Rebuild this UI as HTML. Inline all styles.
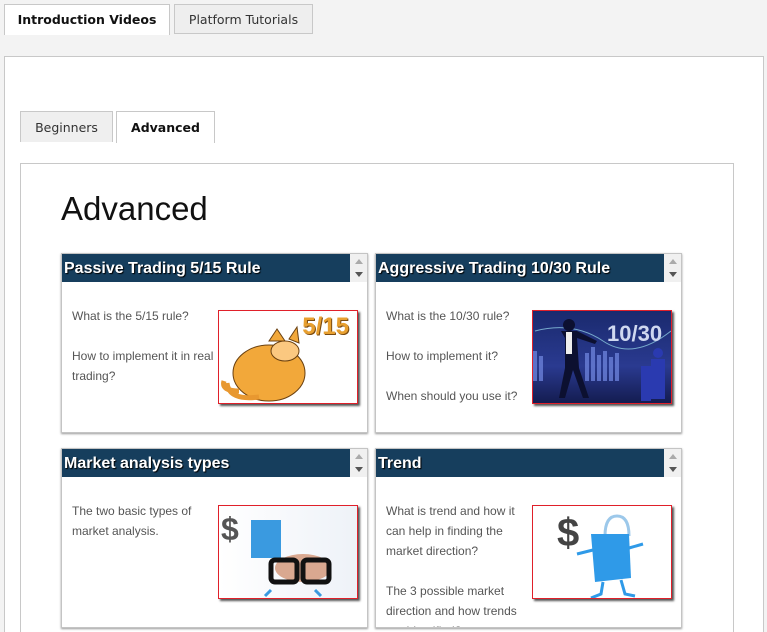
<!DOCTYPE html>
<html><head><meta charset="utf-8"><style>
*{box-sizing:border-box;margin:0;padding:0}
html,body{width:767px;height:632px;overflow:hidden}
body{background:#f3f3f3;font-family:"Liberation Sans",sans-serif;position:relative}
#w{position:absolute;left:0;top:0;width:767px;height:632px;overflow:hidden}
.abs{position:absolute}
.tab{position:absolute;font-family:"DejaVu Sans","Liberation Sans",sans-serif;font-size:12.5px;text-align:center;border:1px solid #c8c8c8;border-bottom:none;color:#333}
.panel{position:absolute;background:#fff;border:1px solid #c8c8c8}
.card{position:absolute;width:307px;height:180px;background:#fff;border:1px solid #c4c4c4;box-shadow:0 1px 2px #999;overflow:hidden}
.hd{height:28px;background:#163e5d;color:#fff;font-weight:bold;font-size:16px;line-height:29px;padding-left:2px;margin-right:17px;text-shadow:1px 1px 1px #000}
.sb{position:absolute;right:0;top:0;width:17px;height:28px;background:#f0f0f0}
.sb:before{content:"";position:absolute;left:5px;top:5px;border:4px solid transparent;border-bottom:5px solid #aaa;border-top:none}
.sb:after{content:"";position:absolute;left:5px;top:18px;border:4px solid transparent;border-top:5px solid #555;border-bottom:none}
.tx{position:absolute;left:10px;top:52px;width:150px;font-size:12px;line-height:20px;color:#555}
.img{position:absolute;left:156px;top:56px;width:140px;height:94px;border:1px solid #e0202a;box-shadow:2px 2px 2px #555;background:#fff;overflow:hidden}
</style></head><body><div id="w">
<div class="tab" style="left:4px;top:4px;width:166px;height:31px;background:#fff;font-weight:bold;line-height:30px;color:#111">Introduction Videos</div>
<div class="tab" style="left:174px;top:4px;width:139px;height:30px;background:#eee;line-height:30px;border-bottom:1px solid #c8c8c8">Platform Tutorials</div>
<div class="panel" style="left:4px;top:56px;width:760px;height:600px"></div>
<div class="tab" style="left:20px;top:111px;width:93px;height:31px;background:#efefef;line-height:31px">Beginners</div>
<div class="tab" style="left:116px;top:111px;width:99px;height:32px;background:#fff;font-weight:bold;line-height:31px;color:#111;z-index:2">Advanced</div>
<div class="panel" style="left:20px;top:163px;width:714px;height:500px"></div>
<div class="abs" style="left:61px;top:190px;font-size:33px;color:#111;font-weight:normal">Advanced</div>

<div class="card" style="left:61px;top:253px">
<div class="hd">Passive Trading 5/15 Rule</div><div class="sb"></div>
<div class="tx">What is the 5/15 rule?<br><br>How to implement it in real trading?</div>
<div class="img"><div class="abs" style="right:8px;top:2px;font-size:24px;font-weight:bold;color:#e8a030;text-shadow:1px 1px 0 #7a4a10">5/15</div>
<svg class="abs" style="left:0;top:0" width="140" height="94"><ellipse cx="50" cy="62" rx="36" ry="28" fill="#f2a83a" stroke="#6a4010"/><polygon points="50,30 58,18 66,30" fill="#f2a83a" stroke="#6a4010"/><polygon points="70,28 78,16 80,32" fill="#f2a83a" stroke="#6a4010"/><ellipse cx="66" cy="40" rx="14" ry="10" fill="#fbc880" stroke="#6a4010"/><path d="M20 80 Q2 80 5 70 M8 72 Q10 90 40 86" stroke="#e89830" stroke-width="5" fill="none"/></svg></div>
</div>

<div class="card" style="left:375px;top:253px">
<div class="hd">Aggressive Trading 10/30 Rule</div><div class="sb"></div>
<div class="tx">What is the 10/30 rule?<br><br>How to implement it?<br><br>When should you use it?</div>
<div class="img" style="background:linear-gradient(#1a2a6e,#2a3a90 60%,#141c50)"><svg class="abs" style="left:0;top:0" width="140" height="94"><g fill="#6a80d8" opacity=".8"><rect x="0" y="40" width="4" height="30"/><rect x="6" y="45" width="4" height="25"/><rect x="52" y="42" width="4" height="28"/><rect x="58" y="36" width="4" height="34"/><rect x="64" y="44" width="4" height="26"/><rect x="70" y="40" width="4" height="30"/><rect x="76" y="46" width="4" height="24"/><rect x="82" y="42" width="4" height="28"/></g><path d="M2 20 Q40 10 70 30 T138 20" stroke="#7ac" fill="none"/><g fill="#0c1030"><circle cx="36" cy="14" r="6"/><path d="M28 20h16l20 10-2 3-18-6 2 30 10 30h-6l-10-28-8 28h-6l6-30v-30z"/></g><rect x="33" y="21" width="6" height="22" fill="#eee"/><g fill="#2a3ab0"><circle cx="125" cy="42" r="5"/><rect x="118" y="48" width="14" height="40"/><rect x="108" y="55" width="10" height="35"/></g><text x="74" y="30" font-family="Liberation Sans" font-size="22" font-weight="bold" fill="#cfd8f0">10/30</text></svg></div>
</div>

<div class="card" style="left:61px;top:448px">
<div class="hd">Market analysis types</div><div class="sb"></div>
<div class="tx">The two basic types of market analysis.</div>
<div class="img" style="background:linear-gradient(90deg,#fff,#eef2f8)"><svg class="abs" style="left:0;top:0" width="140" height="94"><text x="2" y="34" font-family="Liberation Sans" font-size="32" font-weight="bold" fill="#555">$</text><rect x="32" y="14" width="30" height="38" fill="#3a9ae0"/><ellipse cx="84" cy="62" rx="28" ry="14" fill="#d9a890"/><rect x="52" y="54" width="26" height="22" rx="4" fill="none" stroke="#111" stroke-width="5"/><rect x="84" y="54" width="26" height="22" rx="4" fill="none" stroke="#111" stroke-width="5"/><path d="M52 84 l-6 6 M96 84 l6 6" stroke="#3a9ae0" stroke-width="3"/></svg></div>
</div>

<div class="card" style="left:375px;top:448px">
<div class="hd">Trend</div><div class="sb"></div>
<div class="tx">What is trend and how it can help in finding the market direction?<br><br>The 3 possible market direction and how trends are identified?</div>
<div class="img"><svg class="abs" style="left:0;top:0" width="140" height="94"><text x="24" y="40" font-family="Liberation Sans" font-size="40" font-weight="bold" fill="#444">$</text><path d="M72 30 q0 -20 12 -20 q12 0 12 20" stroke="#9cc8ea" stroke-width="3" fill="none"/><polygon points="58,28 96,28 98,72 62,76" fill="#2f9ae8"/><path d="M70 76 l-2 12 -10 4 M88 74 l4 14 10 2 M60 44 l-16 4 M96 42 l14 -4" stroke="#2f9ae8" stroke-width="3" fill="none"/></svg></div>
</div>
</div></body></html>
